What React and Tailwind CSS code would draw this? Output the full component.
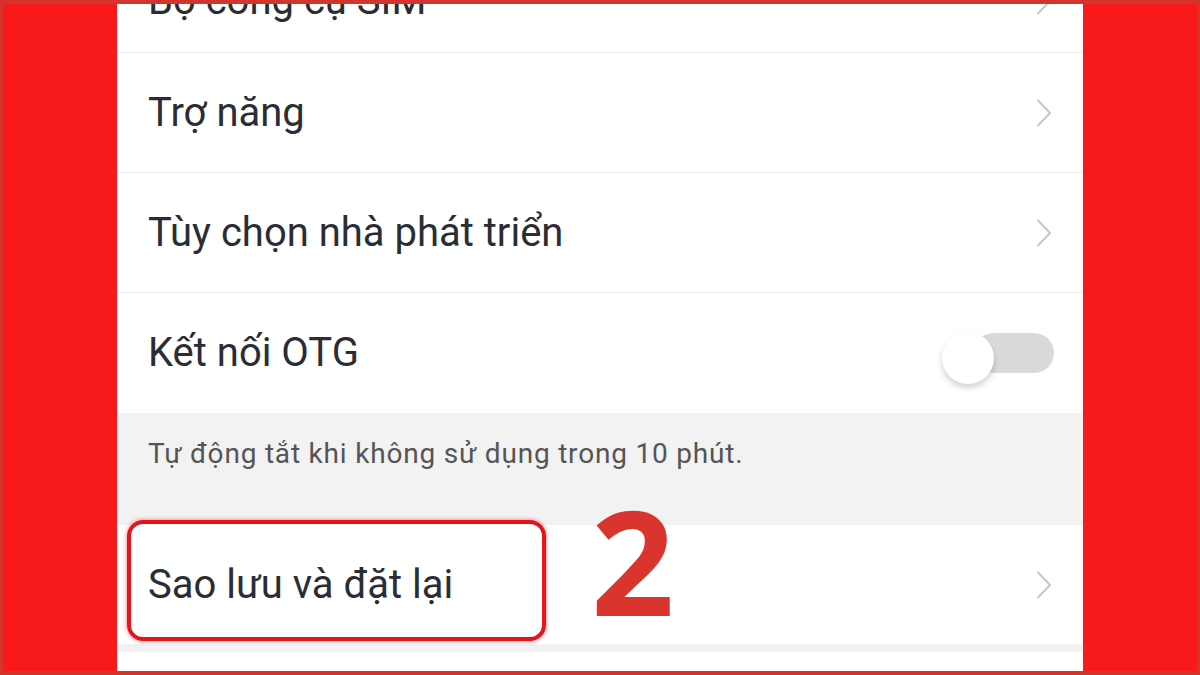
import React from "react";

function Chevron() {
  return (
    <svg width="16" height="28" viewBox="0 0 16 28" fill="none" className="shrink-0">
      <path d="M2 1.5 L14 14 L2 26.5" stroke="#c6c6c6" strokeWidth="2" strokeLinecap="round" strokeLinejoin="round" />
    </svg>
  );
}

function Row({ label, children, divider = true, extra = "" }) {
  return (
    <div className={`relative flex h-[120px] items-center justify-between pl-[31px] pr-[31px] ${divider ? "border-b border-[#ededed]" : ""} ${extra}`}>
      <span className="text-[40px] leading-none text-[#2a2d34]">{label}</span>
      {children}
    </div>
  );
}

export default function App() {
  return (
    <div
      className="flex h-[675px] w-[1200px] justify-center overflow-hidden border-x-[3px] border-t-4 border-b-4 border-[#d3352d] bg-[#f81a1a]"
      style={{ fontFamily: "Roboto, 'Noto Sans', sans-serif" }}
    >
      <div className="relative h-full w-[966px] overflow-hidden bg-white">
        <div className="-mt-[71px] flex flex-col">
          <Row label="Bộ công cụ SIM" extra="pt-[16px]">
            <Chevron />
          </Row>
          <Row label="Trợ năng">
            <Chevron />
          </Row>
          <Row label="Tùy chọn nhà phát triển">
            <Chevron />
          </Row>
          <Row label="Kết nối OTG" divider={false}>
            <div className="relative mr-[-2px] h-[40px] w-[112px]">
              <div className="absolute right-0 top-0 h-[40px] w-[80px] rounded-full bg-[#dadada]" />
              <div className="absolute left-0 top-[-1px] h-[52px] w-[52px] rounded-full bg-white shadow-[0_4px_6px_rgba(0,0,0,0.18)]" />
            </div>
          </Row>
          <div className="flex h-[112px] items-start bg-[#f2f2f2] pl-[31px] pt-[27px]">
            <span className="text-[28px] leading-none tracking-[0.8px] text-[#555555]">
              Tự động tắt khi không sử dụng trong 10 phút.
            </span>
          </div>
          <div className="relative flex h-[119px] items-center justify-between pl-[31px] pr-[31px]">
            <span className="text-[40px] leading-none text-[#2a2d34]">Sao lưu và đặt lại</span>
            <Chevron />
            <div className="absolute left-[10px] top-[-5px] h-[121px] w-[419px] rounded-[16px] border-[4px] border-[#e2141c] shadow-[0_0_4px_rgba(226,20,28,0.6)]" />
            <span
              className="absolute left-[474px] top-[-38px] text-[146px] font-bold leading-none text-[#d9342e]"
              style={{ fontFamily: "'Open Sans', sans-serif" }}
            >
              2
            </span>
          </div>
          <div className="h-[8px] bg-[#f2f2f2]" />
          <div className="h-[40px] bg-white" />
        </div>
      </div>
    </div>
  );
}
